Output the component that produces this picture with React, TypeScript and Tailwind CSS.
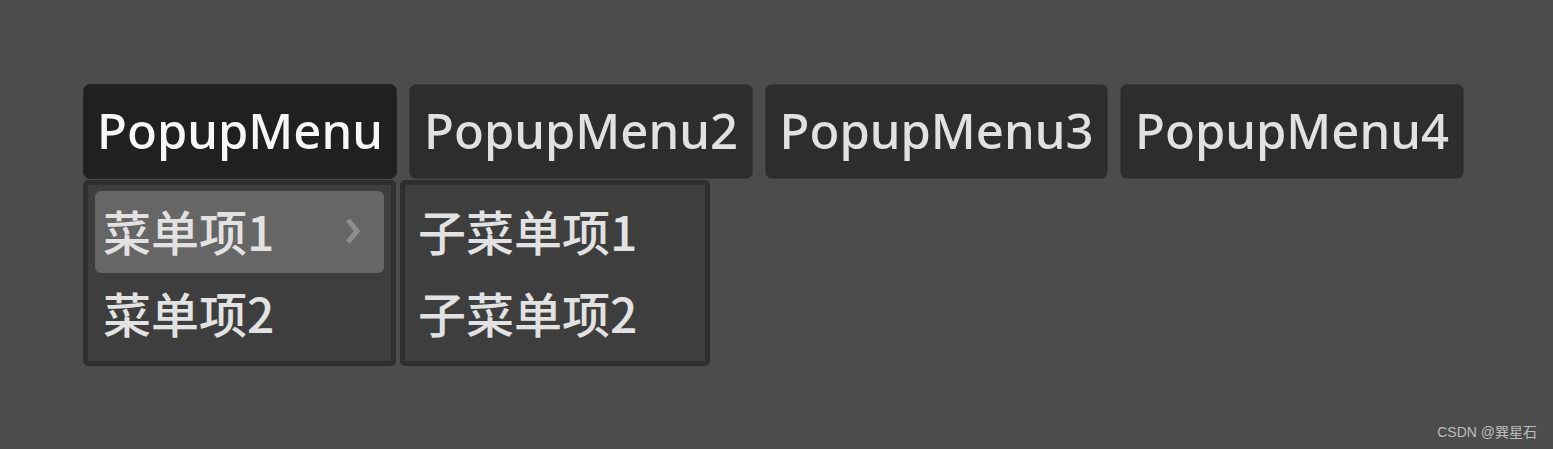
import React from "react";

const latin = { fontFamily: '"Noto Sans", "Open Sans", sans-serif' };
const cjk = { fontFamily: '"Noto Sans CJK SC", "Noto Sans", sans-serif' };
const mark = { fontFamily: '"Liberation Sans", "Noto Sans CJK SC", sans-serif' };

function MenuButton({ label, pressed, width }: { label: string; pressed?: boolean; width: string }) {
  return (
    <div
      style={latin}
      className={`${width} h-[95px] flex items-center justify-center rounded-[7px] text-[49px] font-medium leading-none ${
        pressed
          ? "bg-[#202020] text-[#f7f7f7] border border-[#262626]"
          : "bg-[#2d2d2d] text-[#e1e1e1] border border-[#393939]"
      }`}
    >
      <span className="-mt-[2px]">{label}</span>
    </div>
  );
}

function MenuItem({ label, active, arrow, pad }: { label: string; active?: boolean; arrow?: boolean; pad: string }) {
  return (
    <div
      className={`h-[82px] flex items-center justify-between rounded-[6px] ${pad} pr-[22px] ${
        active ? "bg-[#666666]" : ""
      }`}
    >
      <span style={cjk} className="-mt-[5px] text-[48px] font-medium leading-none text-[#e2e2e2]">
        {label}
      </span>
      {arrow && (
        <svg width="18" height="28" viewBox="0 0 18 28" className="-mt-[2px]">
          <path d="M4 3 L13 14 L4 25" fill="none" stroke="#8e8e8e" strokeWidth="5" />
        </svg>
      )}
    </div>
  );
}

export default function App() {
  return (
    <div className="relative h-[449px] w-full bg-[#4c4c4c] overflow-hidden">
      <div className="pl-[83px] pt-[84px] flex flex-col">
        <div className="flex gap-[12px]">
          <MenuButton label="PopupMenu" pressed width="w-[314px]" />
          <MenuButton label="PopupMenu2" width="w-[344px]" />
          <MenuButton label="PopupMenu3" width="w-[343px]" />
          <MenuButton label="PopupMenu4" width="w-[344px]" />
        </div>
        <div className="flex gap-[4px] mt-[1px]">
          <div className="w-[313px] h-[186px] rounded-[5px] border-[5px] border-[#2f2f2f] bg-[#3e3e3e] px-[7px] py-[6px]">
            <MenuItem label="菜单项1" active arrow pad="pl-[8px]" />
            <MenuItem label="菜单项2" pad="pl-[8px]" />
          </div>
          <div className="w-[310px] h-[186px] rounded-[5px] border-[5px] border-[#2f2f2f] bg-[#3e3e3e] px-[7px] py-[6px]">
            <MenuItem label="子菜单项1" pad="pl-[6px]" />
            <MenuItem label="子菜单项2" pad="pl-[6px]" />
          </div>
        </div>
      </div>
      <div
        style={mark}
        className="absolute right-[16px] bottom-[10px] text-[14px] leading-none text-[#bdbdbd]"
      >
        CSDN @巽星石
      </div>
    </div>
  );
}
